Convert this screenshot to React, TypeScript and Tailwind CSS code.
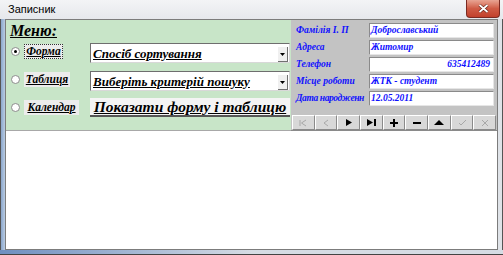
import React from "react";

const serif = "font-['Liberation_Serif',serif]";

function Radio({ checked }: { checked?: boolean }) {
  return (
    <div className="w-[9px] h-[9px] rounded-full border border-[#8c8c8c] bg-white flex items-center justify-center shrink-0">
      {checked && <div className="w-[3px] h-[3px] rounded-full bg-black" />}
    </div>
  );
}

function Combo({ text }: { text: string }) {
  return (
    <div className="w-[200px] h-[20px] bg-white border-t border-l border-[#6e6e6e] border-b border-r border-b-[#d8d8d8] border-r-[#d8d8d8] flex items-center relative">
      <span className={`${serif} italic font-bold underline text-[13px] leading-none pl-[2px] text-black whitespace-nowrap`}>{text}</span>
      <div className="absolute right-[1px] bottom-[0px] w-[10px] h-[15px] bg-[#f0f0f0] border-r border-b border-[#707070] flex items-center justify-center">
        <svg width="5" height="3" viewBox="0 0 5 3"><path d="M0 0h5L2.5 3z" fill="#000" /></svg>
      </div>
    </div>
  );
}

function Field({ label, value, right, tight }: { label: string; value: string; right?: boolean; tight?: boolean }) {
  return (
    <div className="flex items-center h-[15px]">
      <div className={`${serif} italic font-bold text-[9.5px] text-[#1010ff] w-[78px] pl-[5px] whitespace-nowrap leading-none ${tight ? "tracking-[-0.4px]" : ""}`}>{label}</div>
      <div className={`w-[125px] h-[15px] bg-white border-t border-l border-[#8a8a8a] border-b border-r border-b-[#e6e6e6] border-r-[#e6e6e6] flex items-center ${right ? "justify-end pr-[3px]" : "pl-[1px]"}`}>
        <span className={`${serif} italic font-bold text-[9.5px] text-[#1010ff] leading-none whitespace-nowrap`}>{value}</span>
      </div>
    </div>
  );
}

function NavBtn({ children }: { children: React.ReactNode }) {
  return (
    <div className="flex-1 h-full flex items-center justify-center bg-[#d8d8d8] border-t border-l border-white border-b border-r border-b-[#8a8a8a] border-r-[#8a8a8a]">
      {children}
    </div>
  );
}

export default function App() {
  const dis = "#a8a8a8";
  return (
    <div className="w-[503px] h-[255px] relative overflow-hidden bg-[#e4e7eb] font-['Liberation_Sans',sans-serif]">
      {/* title bar */}
      <div className="h-[19px] flex items-center pl-[8px] text-[11px] text-black bg-gradient-to-b from-[#f3f4f6] to-[#e6e8ec]">
        Записник
      </div>
      <div className="absolute right-[3px] top-0 w-[34px] h-[18px] rounded-b-[4px] border border-[#7a2a22] border-t-0 bg-gradient-to-b from-[#e8a493] via-[#cf5b45] to-[#c2402c] flex items-center justify-center">
        <svg width="11" height="9" viewBox="0 0 11 9">
          <path d="M1.5 1l8 7M9.5 1l-8 7" stroke="#5a1a12" strokeWidth="3" />
          <path d="M1.5 1l8 7M9.5 1l-8 7" stroke="#ffffff" strokeWidth="1.8" />
        </svg>
      </div>
      <div className="flex h-[231px]">
        <div className="w-[5px] h-full border-l border-[#555] bg-gradient-to-r from-[#8ba7cc] to-[#b9cbe2]" />
        <div className="flex-1 h-full border border-[#7c7c7c] bg-white flex flex-col">
          <div className="flex h-[111px]">
            {/* green panel */}
            <div className="w-[285px] h-full bg-[#c8e5c8] flex flex-col pl-[4px] border-b border-[#a8a8a8]">
              <div className={`${serif} italic font-bold underline text-[16px] leading-[20px] h-[22px] pt-[1px] text-black`}>Меню:</div>
              <div className="flex items-start mt-[1px] h-[20px]">
                <div className="w-[80px] flex items-center pl-[1px] mt-[1px]">
                  <Radio checked />
                  <div className="ml-[4px] h-[15px] w-[39px] bg-[#ececec] border border-dotted border-[#333] flex items-center justify-center">
                    <span className={`${serif} italic font-bold underline text-[11.5px] leading-none text-black`}>Форма</span>
                  </div>
                </div>
                <Combo text="Спосіб сортування" />
              </div>
              <div className="flex items-start mt-[8px] h-[20px]">
                <div className="w-[80px] flex items-center pl-[1px] mt-[1px]">
                  <Radio />
                  <div className="ml-[4px] h-[15px] w-[46px] bg-[#ececec] flex items-center justify-center">
                    <span className={`${serif} italic font-bold underline text-[11.5px] leading-none text-black`}>Таблиця</span>
                  </div>
                </div>
                <Combo text="Виберіть критерій пошуку" />
              </div>
              <div className="flex items-center mt-[7px] h-[19px]">
                <div className="w-[80px] flex items-center pl-[1px]">
                  <Radio />
                  <div className="ml-[4px] h-[15px] w-[55px] bg-[#ececec] flex items-center justify-center">
                    <span className={`${serif} italic font-bold underline text-[11.5px] leading-none text-black whitespace-nowrap`}>Календар</span>
                  </div>
                </div>
                <div className="w-[200px] h-[19px] bg-[#f4f4f4] border-b-2 border-[#555] flex items-center justify-center">
                  <span className={`${serif} italic font-bold underline text-[15.5px] leading-none text-black whitespace-nowrap`}>Показати форму і таблицю</span>
                </div>
              </div>
            </div>
            {/* grey panel */}
            <div className="flex-1 h-full bg-[#c3c3c3] flex flex-col pt-[3px] gap-[2px] border-b border-[#8a8a8a]">
              <Field label="Фамілія І. П" value="Доброславський" />
              <Field label="Адреса" value="Житомир" />
              <Field label="Телефон" value="635412489" right />
              <Field label="Місце роботи" value="ЖТК - студент" />
              <Field label="Дата народженн" value="12.05.2011" tight />
              <div className="mt-auto h-[15px] mb-[0px] flex mx-[1px]">
                <NavBtn>
                  <svg width="8" height="8" viewBox="0 0 8 8"><path d="M1 1v6M7 1L2.5 4 7 7" stroke={dis} fill="none" strokeWidth="1" /></svg>
                </NavBtn>
                <NavBtn>
                  <svg width="8" height="8" viewBox="0 0 8 8"><path d="M6 1L2 4l4 3" stroke={dis} fill="none" strokeWidth="1" /></svg>
                </NavBtn>
                <NavBtn>
                  <svg width="6" height="7" viewBox="0 0 6 7"><path d="M0 0l6 3.5L0 7z" fill="#000" /></svg>
                </NavBtn>
                <NavBtn>
                  <svg width="9" height="7" viewBox="0 0 9 7"><path d="M0 0l6 3.5L0 7z" fill="#000" /><rect x="7" y="0" width="2" height="7" fill="#000" /></svg>
                </NavBtn>
                <NavBtn>
                  <svg width="8" height="8" viewBox="0 0 8 8"><path d="M3 0h2v3h3v2H5v3H3V5H0V3h3z" fill="#000" /></svg>
                </NavBtn>
                <NavBtn>
                  <svg width="8" height="2" viewBox="0 0 8 2"><rect width="8" height="2" fill="#000" /></svg>
                </NavBtn>
                <NavBtn>
                  <svg width="10" height="5" viewBox="0 0 10 5"><path d="M0 5L5 0l5 5z" fill="#000" /></svg>
                </NavBtn>
                <NavBtn>
                  <svg width="9" height="7" viewBox="0 0 9 7"><path d="M1 4l2 2 5-5" stroke={dis} fill="none" strokeWidth="1" /></svg>
                </NavBtn>
                <NavBtn>
                  <svg width="8" height="8" viewBox="0 0 8 8"><path d="M1 1l6 6M7 1L1 7" stroke={dis} fill="none" strokeWidth="1" /></svg>
                </NavBtn>
              </div>
            </div>
          </div>
        </div>
        <div className="w-[5px] h-full bg-[#dfe3e8] border-r border-[#555]" />
      </div>
      <div className="h-[5px] bg-gradient-to-r from-[#6e8fc0] via-[#d6dce4] to-[#d6dce4] border-b border-[#444]" />
    </div>
  );
}
